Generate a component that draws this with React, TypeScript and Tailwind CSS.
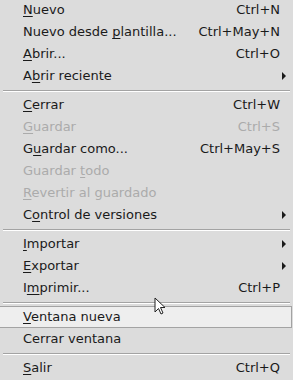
import { Fragment } from "react"

type Item =
  | { sep: true }
  | {
      sep?: false
      label: string
      mn: number
      shortcut?: string
      sub?: boolean
      disabled?: boolean
      hover?: boolean
    }

const items: Item[] = [
  { label: "Nuevo", mn: 0, shortcut: "Ctrl+N" },
  { label: "Nuevo desde plantilla...", mn: 12, shortcut: "Ctrl+May+N" },
  { label: "Abrir...", mn: 0, shortcut: "Ctrl+O" },
  { label: "Abrir reciente", mn: 1, sub: true },
  { sep: true },
  { label: "Cerrar", mn: 0, shortcut: "Ctrl+W" },
  { label: "Guardar", mn: 0, shortcut: "Ctrl+S", disabled: true },
  { label: "Guardar como...", mn: 1, shortcut: "Ctrl+May+S" },
  { label: "Guardar todo", mn: 8, disabled: true },
  { label: "Revertir al guardado", mn: 0, disabled: true },
  { label: "Control de versiones", mn: 1, sub: true },
  { sep: true },
  { label: "Importar", mn: 0, sub: true },
  { label: "Exportar", mn: 0, sub: true },
  { label: "Imprimir...", mn: 1, shortcut: "Ctrl+P" },
  { sep: true },
  { label: "Ventana nueva", mn: 0, hover: true },
  { label: "Cerrar ventana", mn: -1 },
  { sep: true },
  { label: "Salir", mn: 0, shortcut: "Ctrl+Q" },
]

function Label({ text, mn }: { text: string; mn: number }) {
  if (mn < 0) return <span>{text}</span>
  return (
    <span>
      {text.slice(0, mn)}
      <span className="underline decoration-1 underline-offset-2">{text[mn]}</span>
      {text.slice(mn + 1)}
    </span>
  )
}

export default function App() {
  return (
    <div
      className="relative w-[293px] h-[380px] overflow-hidden bg-[#dcdcdc] text-[13px] text-[#1a1a1a]"
      style={{ fontFamily: '"DejaVu Sans", sans-serif' }}
    >
      <div className="flex flex-col -mt-px">
        {items.map((it, i) =>
          it.sep ? (
            <div key={i} className="h-[7px] flex flex-col justify-center px-[3px]">
              <div className="h-px bg-[#a3a3a3]" />
              <div className="h-px bg-white" />
            </div>
          ) : (
            <Fragment key={i}>
              <div
                className={
                  "flex items-center h-[22px] pl-[23px] pr-[13px] " +
                  (it.hover ? "bg-[#eeeeee] border border-l-0 border-[#a3a3a3] mr-[1px] pr-[12px]" : "") +
                  (it.disabled ? " text-[#ababab]" : "")
                }
              >
                <div className="flex-1 whitespace-nowrap">
                  <Label text={it.label} mn={it.mn} />
                </div>
                {it.shortcut && <div className="whitespace-nowrap">{it.shortcut}</div>}
                {it.sub && (
                  <svg width="6" height="8" viewBox="0 0 6 8" className="-mr-[7px]">
                    <path d="M1 0 L5 4 L1 8 Z" fill="#1a1a1a" />
                  </svg>
                )}
              </div>
            </Fragment>
          )
        )}
      </div>
      <svg
        width="14"
        height="20"
        viewBox="0 0 14 20"
        className="absolute left-[154px] top-[297px]"
      >
        <path
          d="M1 1 L1 15 L4.5 11.5 L7 17 L9 16 L6.5 10.5 L11 10.5 Z"
          fill="white"
          stroke="#222"
          strokeWidth="1"
          strokeLinejoin="round"
        />
      </svg>
    </div>
  )
}
